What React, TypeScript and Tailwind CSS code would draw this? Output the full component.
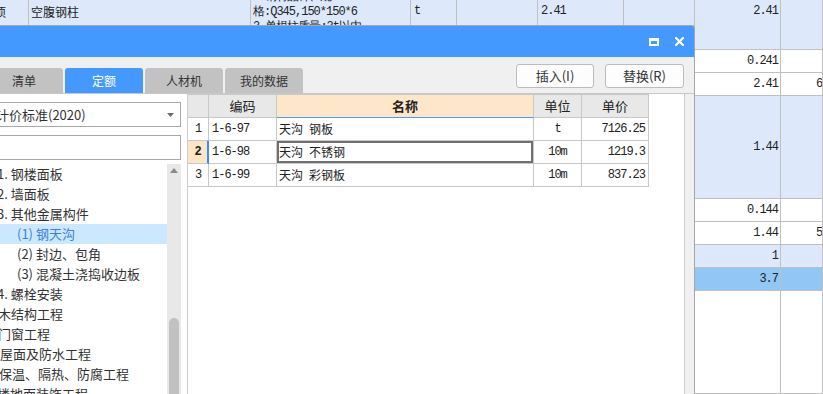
import React from 'react';

const MONO = 'font-mono text-[12px] tracking-[-1px]';

const bgRowStyle = [
  'bg-[#dde9fb]',
  'bg-white',
  'bg-white',
  'bg-[#dde9fb]',
  'bg-white',
  'bg-white',
  'bg-[#dde9fb]',
  'bg-[#92c6f4]',
  'bg-white',
];

const rightVals: (string | null)[][] = [
  [null, null],
  ['0.241', null],
  ['2.41', '6'],
  ['1.44', null],
  ['0.144', null],
  ['1.44', '5'],
  ['1', null],
  ['3.7', null],
  [null, null],
];

function BackgroundTable() {
  return (
    <div className="grid h-[394px] w-[823px] grid-cols-[29px_222px_160px_46px_81px_86px_71px_86px_42px] grid-rows-[50px_23px_23px_103px_23px_23px_23px_23px_1fr]">
      {bgRowStyle.map((bg, r) => (
        <React.Fragment key={r}>
          {Array.from({ length: 9 }).map((_, c) => {
            let content: React.ReactNode = null;
            if (r === 0) {
              if (c === 0) content = <span className="ml-[-6px] text-[12px] leading-[23px]">项</span>;
              if (c === 1) content = <span className="pl-[2px] text-[12px] leading-[23px]">空腹钢柱</span>;
              if (c === 2)
                content = (
                  <div className={`mt-[-10px] whitespace-nowrap pl-[2px] leading-[15px] ${MONO}`}>
                    <div>1.钢材品种、规</div>
                    <div>格:Q345,150*150*6</div>
                    <div>3.单根柱质量:3t以内</div>
                  </div>
                );
              if (c === 3) content = <span className={`pl-[3px] leading-[23px] ${MONO}`}>t</span>;
              if (c === 5) content = <span className={`pl-[3px] leading-[23px] ${MONO}`}>2.41</span>;
              if (c === 7)
                content = <span className={`ml-auto pr-[2px] leading-[23px] ${MONO}`}>2.41</span>;
            } else if (c === 7 && rightVals[r][0]) {
              content = <span className={`ml-auto pr-[2px] ${MONO}`}>{rightVals[r][0]}</span>;
            } else if (c === 8 && rightVals[r][1]) {
              content = <span className={`ml-[35px] ${MONO}`}>{rightVals[r][1]}</span>;
            }
            return (
              <div
                key={c}
                className={`flex overflow-hidden border-b border-r border-[#c0c0c0] ${bg} ${r === 0 ? 'items-start' : 'items-center'}`}
              >
                {content}
              </div>
            );
          })}
        </React.Fragment>
      ))}
    </div>
  );
}

const tabs = [
  { label: '清单', active: false },
  { label: '定额', active: true },
  { label: '人材机', active: false },
  { label: '我的数据', active: false },
];

type TreeItem = { label: string; pad: string; sel?: boolean };
const tree: TreeItem[] = [
  { label: '1. 钢楼面板', pad: 'pl-[12px]' },
  { label: '2. 墙面板', pad: 'pl-[12px]' },
  { label: '3. 其他金属构件', pad: 'pl-[12px]' },
  { label: '(1) 钢天沟', pad: 'pl-[32px]', sel: true },
  { label: '(2) 封边、包角', pad: 'pl-[32px]' },
  { label: '(3) 混凝土浇捣收边板', pad: 'pl-[32px]' },
  { label: '4. 螺栓安装', pad: 'pl-[12px]' },
  { label: '木结构工程', pad: 'pl-[13px]' },
  { label: '门窗工程', pad: 'pl-[13px]' },
  { label: '屋面及防水工程', pad: 'pl-[15px]' },
  { label: '保温、隔热、防腐工程', pad: 'pl-[14px]' },
  { label: '楼地面装饰工程', pad: 'pl-[12px]' },
];

const rows = [
  { n: '1', code: '1-6-97', name: '天沟\u2002钢板', unit: 't', price: '7126.25' },
  { n: '2', code: '1-6-98', name: '天沟\u2002不锈钢', unit: '10m', price: '1219.3', sel: true },
  { n: '3', code: '1-6-99', name: '天沟\u2002彩钢板', unit: '10m', price: '837.23' },
];

function Dialog() {
  return (
    <div className="absolute left-[-20px] top-[25px] flex h-[369px] w-[715px] flex-col overflow-hidden rounded-tr-[3px] border-r border-t border-[#a6a6a6] bg-[#f0f0f0]">
      {/* title bar */}
      <div className="flex h-[31px] shrink-0 items-center justify-end gap-[16px] bg-[#4499ff] pr-[10px]">
        <div className="h-[8px] w-[10px] border-2 border-t-[3px] border-white" />
        <svg width="9" height="9" viewBox="0 0 9 9" className="block">
          <path d="M1 1 L8 8 M8 1 L1 8" stroke="white" strokeWidth="2.2" strokeLinecap="square" />
        </svg>
      </div>
      {/* tabs + buttons */}
      <div className="flex h-[37px] shrink-0 border-b border-[#c8c8c8] pl-[5px] pr-[10px]">
        <div className="flex items-end gap-[2px]">
          {tabs.map((t) => (
            <div
              key={t.label}
              className={`flex h-[25px] w-[78px] items-center justify-center rounded-t-[3px] text-[12px] ${
                t.active ? 'bg-[#4499ff] text-white' : 'bg-[#c2c2c2] text-[#333]'
              }`}
            >
              {t.label}
            </div>
          ))}
        </div>
        <div className="ml-auto flex gap-[11px] pt-[7px]">
          <div className="flex h-[24px] w-[78px] items-center justify-center rounded-[3px] border border-[#bcbcbc] bg-[#fdfdfd] text-[13px] text-[#333]">
            插入(I)
          </div>
          <div className="flex h-[24px] w-[79px] items-center justify-center rounded-[3px] border border-[#bcbcbc] bg-[#fdfdfd] text-[13px] text-[#333]">
            替换(R)
          </div>
        </div>
      </div>
      {/* body */}
      <div className="flex min-h-0 flex-1 pl-[5px] pr-[9px]">
        {/* left panel */}
        <div className="flex w-[202px] shrink-0 flex-col bg-white pr-[6px]">
          <div className="mt-[8px] flex h-[25px] shrink-0 items-center border border-[#a9a9a9] bg-white pl-[10px] pr-[6px] text-[13px] text-[#333]">
            <span>计价标准(2020)</span>
            <svg width="7" height="4" viewBox="0 0 7 4" className="ml-auto block">
              <path d="M0 0 L7 0 L3.5 4 Z" fill="#6b6b6b" />
            </svg>
          </div>
          <div className="mt-[8px] h-[25px] shrink-0 border border-[#a9a9a9] bg-white" />
          <div className="mt-[4px] flex min-h-0 flex-1">
            <div className="flex-1 overflow-hidden">
              {tree.map((it) => (
                <div
                  key={it.label}
                  className={`flex h-[20px] items-center whitespace-nowrap text-[13px] ${it.pad} ${
                    it.sel ? 'bg-[#cce8ff] text-[#3c7fe0]' : 'text-[#333]'
                  }`}
                >
                  {it.label}
                </div>
              ))}
            </div>
            <div className="flex w-[14px] shrink-0 flex-col items-center bg-[#e8e8e8]">
              <svg width="8" height="5" viewBox="0 0 8 5" className="mt-[4px] block">
                <path d="M0 5 L8 5 L4 0 Z" fill="#8a8a8a" />
              </svg>
              <div className="mt-[145px] w-[10px] flex-1 rounded-t-[5px] bg-[#c1c1c1]" />
            </div>
          </div>
        </div>
        {/* grid panel */}
        <div className="w-[498px] shrink-0 border-l border-r border-[#cdcdcd] bg-white">
          <div className="grid w-[461px] grid-cols-[21px_68px_257px_48px_67px] border-t border-[#c8c8c8] text-[#222]">
            <div className="h-[23px] border-b border-r border-[#c8c8c8] bg-[#e8e8e8]" />
            <div className="flex h-[23px] items-center justify-center border-b border-r border-[#c8c8c8] bg-[#e8e8e8] text-[13px]">编码</div>
            <div className="flex h-[23px] items-center justify-center border-b border-r border-b-[#4d9cf0] border-r-[#c8c8c8] bg-[#fee6c9] text-[13px] font-bold">名称</div>
            <div className="flex h-[23px] items-center justify-center border-b border-r border-[#c8c8c8] bg-[#e8e8e8] text-[13px]">单位</div>
            <div className="flex h-[23px] items-center justify-center border-b border-r border-[#c8c8c8] bg-[#e8e8e8] text-[13px]">单价</div>
            {rows.map((r) => (
              <React.Fragment key={r.n}>
                <div
                  className={`flex h-[23px] items-center justify-center border-b border-[#c8c8c8] ${MONO} ${
                    r.sel ? 'border-r-2 border-r-[#3d8af7] bg-[#fde6c8] font-bold' : 'border-r'
                  }`}
                >
                  {r.n}
                </div>
                <div className={`flex h-[23px] items-center border-b border-r border-[#c8c8c8] pl-[3px] ${MONO}`}>{r.code}</div>
                <div
                  className={`flex h-[23px] items-center whitespace-pre border-b border-r border-[#c8c8c8] pl-[2px] text-[12px] ${
                    r.sel ? 'shadow-[inset_0_0_0_2px_#707070]' : ''
                  }`}
                >
                  {r.name}
                </div>
                <div className={`flex h-[23px] items-center justify-center border-b border-r border-[#c8c8c8] ${MONO}`}>{r.unit}</div>
                <div className={`flex h-[23px] items-center justify-end border-b border-r border-[#c8c8c8] pr-[3px] ${MONO}`}>{r.price}</div>
              </React.Fragment>
            ))}
          </div>
        </div>
      </div>
    </div>
  );
}

export default function App() {
  return (
    <div className="relative h-[394px] w-[823px] overflow-hidden bg-white font-['Noto_Sans_CJK_SC',sans-serif] text-[#222]">
      <BackgroundTable />
      <Dialog />
    </div>
  );
}
